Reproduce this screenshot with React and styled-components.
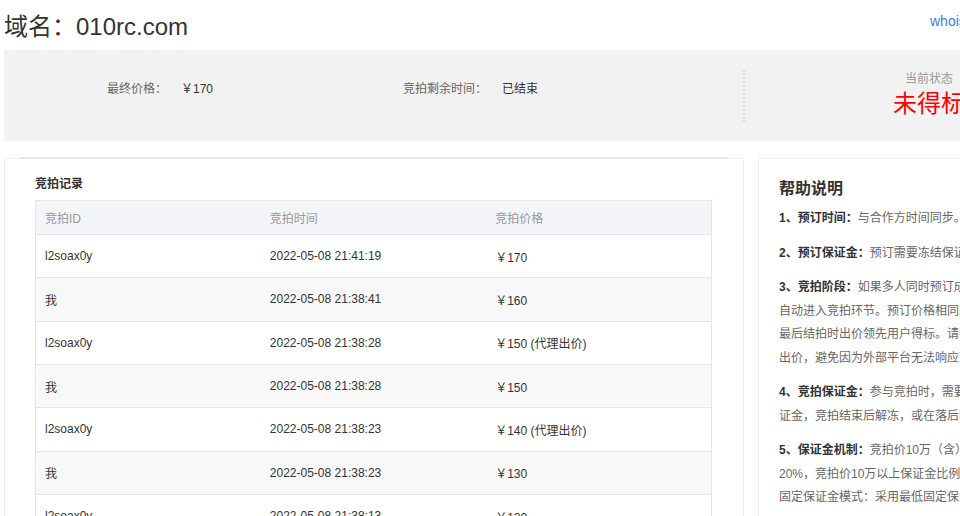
import React from 'react';
import styled, {createGlobalStyle} from 'styled-components';

const GlobalStyle = createGlobalStyle`
  html, body {
    margin: 0;
    padding: 0;
    background: #fff;
    overflow: hidden;
  }
  body {
    font-family: "Liberation Sans", "Noto Sans CJK SC", sans-serif;
    color: #333;
  }
`;

const Page = styled.div`
  width: 1200px;
  padding-left: 4px;
`;

const Header = styled.header`
  display: flex;
  justify-content: space-between;
  height: 50px;
`;

const Title = styled.h1`
  margin: 12px 0 0 0;
  font-size: 24px;
  line-height: 30px;
  font-weight: 400;
  color: #333;
`;

const HeaderLinks = styled.div`
  width: 274px;
  padding-top: 12px;
  line-height: 18px;
  a {
    font-size: 14px;
    color: #3a7be0;
    text-decoration: none;
  }
`;

const InfoBar = styled.section`
  display: flex;
  align-items: flex-start;
  height: 91px;
  background: #f2f2f2;
`;

const PriceGroup = styled.div`
  flex: 0 0 739px;
  display: grid;
  grid-template-columns: 296px auto;
  box-sizing: border-box;
  padding: 29px 0 0 103px;
`;

const InfoItem = styled.div`
  display: flex;
  font-size: 12px;
  line-height: 20px;
  span:first-child {
    color: #666;
    margin-right: ${p => p.$gap}px;
  }
  span:last-child {
    color: #333;
  }
`;

const Separator = styled.div`
  margin-top: 20px;
  height: 52px;
  border-left: 2px dotted #dcdcdc;
`;

const Status = styled.div`
  width: 368px;
  padding-top: 19px;
  text-align: center;
  .label {
    font-size: 12px;
    line-height: 20px;
    color: #999;
  }
  .value {
    font-size: 24px;
    line-height: 30px;
    color: #ff0000;
  }
`;

const Main = styled.main`
  display: flex;
  align-items: flex-start;
  gap: 14px;
  margin-top: 17px;
`;

const Card = styled.div`
  box-sizing: border-box;
  width: ${p => p.$width}px;
  height: 420px;
  border: 1px solid #eee;
  background: #fff;
`;

const TopRule = styled.div`
  height: 2px;
  margin: -2px 15px 0 15px;
  background: #e6e6e6;
`;

const CardTitle = styled.h3`
  margin: 15px 0 6px 30px;
  font-size: 12px;
  line-height: 20px;
  font-weight: 700;
  color: #333;
`;

const Table = styled.table`
  margin-left: 30px;
  width: 677px;
  border-collapse: collapse;
  table-layout: fixed;
  font-size: 12px;
  border: 1px solid #e3e6eb;
  th {
    height: 33px;
    padding: 0 9px;
    text-align: left;
    font-weight: 400;
    color: #999;
    background: #f3f5f8;
    border-bottom: 1px solid #e3e6eb;
  }
  td {
    height: 42.33px;
    padding: 0 9px;
    color: #333;
    border-bottom: 1px solid #e3e6eb;
  }
  tbody tr:nth-child(even) td {
    background: #f8f8f9;
  }
`;

const Help = styled.div`
  padding: 18px 20px 0 20px;
  h2 {
    margin: 0 0 6px 0;
    font-size: 16px;
    line-height: 24px;
    font-weight: 700;
    color: #333;
  }
  p {
    margin: 0 0 11px 0;
    font-size: 12px;
    line-height: 23.5px;
    color: #666;
    white-space: nowrap;
  }
  b {
    color: #333;
  }
`;

const rows = [
  ['l2soax0y', '2022-05-08 21:41:19', '￥170'],
  ['我', '2022-05-08 21:38:41', '￥160'],
  ['l2soax0y', '2022-05-08 21:38:28', '￥150 (代理出价)'],
  ['我', '2022-05-08 21:38:28', '￥150'],
  ['l2soax0y', '2022-05-08 21:38:23', '￥140 (代理出价)'],
  ['我', '2022-05-08 21:38:23', '￥130'],
  ['l2soax0y', '2022-05-08 21:38:13', '￥120'],
  ['我', '2022-05-08 21:38:13', '￥110'],
];

export default function App() {
  return (
    <Page>
      <GlobalStyle />
      <Header>
        <Title>域名：010rc.com</Title>
        <HeaderLinks><a href="#">whois查询</a></HeaderLinks>
      </Header>

      <InfoBar>
        <PriceGroup>
          <InfoItem $gap={14}><span>最终价格：</span><span>￥170</span></InfoItem>
          <InfoItem $gap={15}><span>竞拍剩余时间：</span><span>已结束</span></InfoItem>
        </PriceGroup>
        <Separator />
        <Status>
          <div className="label">当前状态</div>
          <div className="value">未得标</div>
        </Status>
      </InfoBar>

      <Main>
        <Card $width={740}>
          <TopRule />
          <CardTitle>竞拍记录</CardTitle>
          <Table>
            <thead>
              <tr><th>竞拍ID</th><th>竞拍时间</th><th>竞拍价格</th></tr>
            </thead>
            <tbody>
              {rows.map((r, i) => (
                <tr key={i}><td>{r[0]}</td><td>{r[1]}</td><td>{r[2]}</td></tr>
              ))}
            </tbody>
          </Table>
        </Card>

        <Card $width={446}>
          <Help>
            <h2>帮助说明</h2>
            <p><b>1、预订时间：</b>与合作方时间同步。</p>
            <p><b>2、预订保证金：</b>预订需要冻结保证金，预订失败后自动解冻。</p>
            <p>
              <b>3、竞拍阶段：</b>如果多人同时预订成功，域名删除后将<br />
              自动进入竞拍环节。预订价格相同的情况下先预订者优先，<br />
              最后结拍时出价领先用户得标。请在结束前及时关注竞拍并<br />
              出价，避免因为外部平台无法响应而导致竞拍失败。
            </p>
            <p>
              <b>4、竞拍保证金：</b>参与竞拍时，需要按照出价冻结相应的保<br />
              证金，竞拍结束后解冻，或在落后时自动解冻。
            </p>
            <p>
              <b>5、保证金机制：</b>竞拍价10万（含）以下保证金比例为出价的<br />
              20%，竞拍价10万以上保证金比例为出价的10%。<br />
              固定保证金模式：采用最低固定保证金，按域名类型确定。
            </p>
          </Help>
        </Card>
      </Main>
    </Page>
  );
}
